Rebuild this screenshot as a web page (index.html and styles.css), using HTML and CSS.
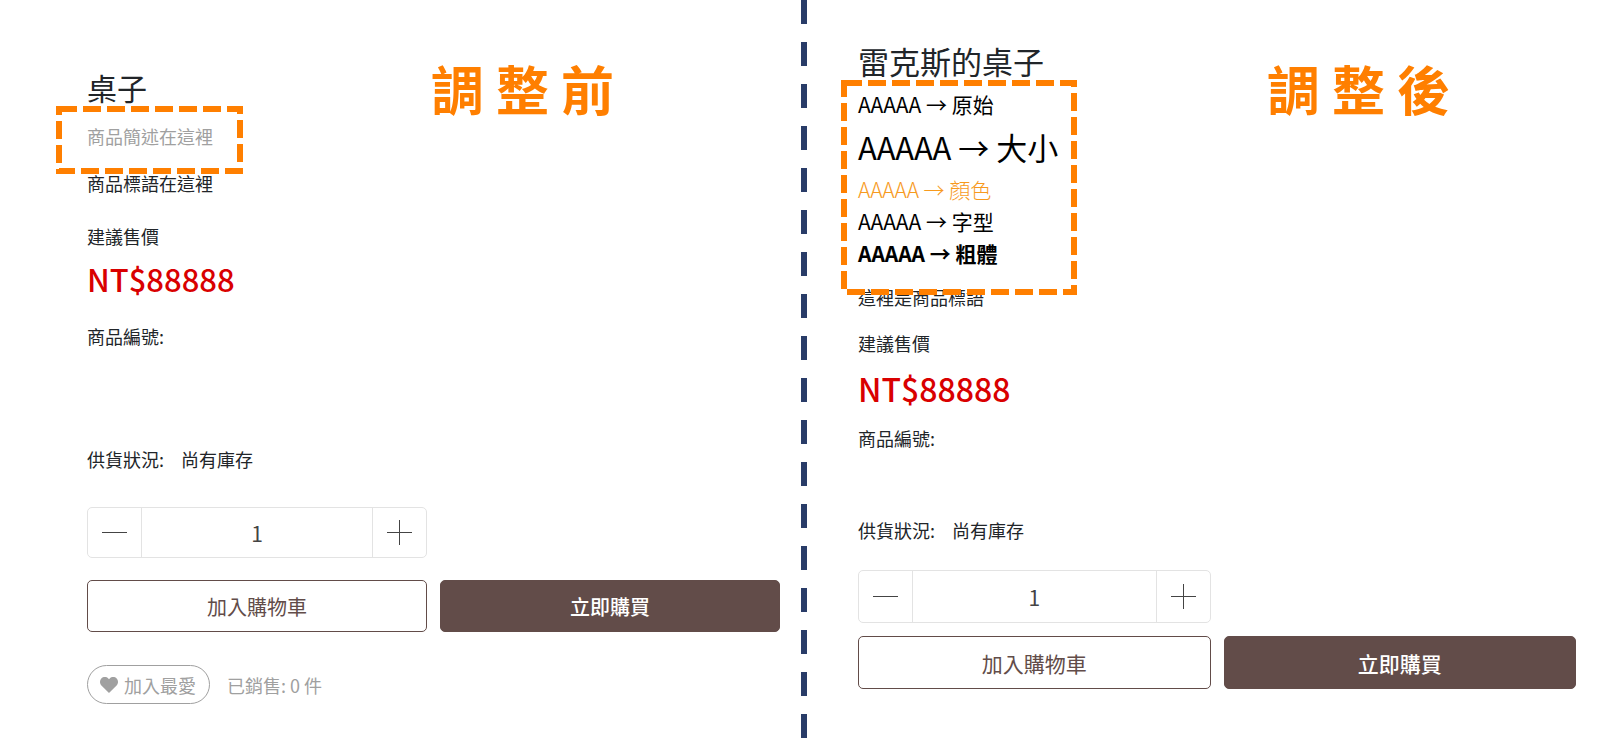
FILE: index.html
```html
<!DOCTYPE html>
<html lang="zh-Hant">
<head>
  <meta charset="UTF-8">
  <meta name="viewport" content="width=device-width, initial-scale=1">
  <title>商品簡述 調整前 / 調整後</title>
  <link rel="stylesheet" href="styles.css">
</head>
<body>
  <main class="compare">

    <section class="pane before">
      <div class="intro">
        <div class="summary">
          <h1 class="title">桌子</h1>
          <div class="description">
            <p class="muted">商品簡述在這裡</p>
            <svg class="frame" width="187" height="68" aria-hidden="true">
              <rect x="3" y="3" width="181" height="62"/>
            </svg>
          </div>
          <p class="slogan">商品標語在這裡</p>
          <p class="price-label">建議售價</p>
          <p class="price">NT$88888</p>
          <p class="sku">商品編號:</p>
          <p class="stock"><span>供貨狀況:</span><span>尚有庫存</span></p>
        </div>
        <h2 class="caption">調 整 前</h2>
      </div>

      <div class="actions">
        <div class="quantity">
          <button type="button" aria-label="減少數量">
            <svg width="25" height="25" viewBox="0 0 25 25"><path d="M0 12.5H25"/></svg>
          </button>
          <input type="text" value="1" aria-label="數量">
          <button type="button" aria-label="增加數量">
            <svg width="25" height="25" viewBox="0 0 25 25"><path d="M0 12.5H25M12.5 0V25"/></svg>
          </button>
        </div>
        <button type="button" class="btn outline">加入購物車</button>
        <button type="button" class="btn solid">立即購買</button>
      </div>

      <div class="extra">
        <button type="button" class="favorite">
          <svg width="18" height="16" viewBox="0 0 18 16">
            <path d="M9 16L1.4 8.4C-.4 6.500-.5 3.400 1.300 1.500 3.300-.5 6.500-.4 8.300 1.500L9 2.200l.7-.7C11.500-.4 14.700-.5 16.700 1.500 18.500 3.400 18.400 6.500 16.600 8.400z"/>
          </svg>
          加入最愛
        </button>
        <span class="sold">已銷售: 0 件</span>
      </div>
    </section>

    <div class="divider"></div>

    <section class="pane after">
      <div class="intro">
        <div class="summary">
          <h1 class="title">雷克斯的桌子</h1>
          <div class="description">
            <p>AAAAA → 原始</p>
            <p class="large">AAAAA → 大小</p>
            <p class="colored">AAAAA → 顏色</p>
            <p>AAAAA → 字型</p>
            <p class="bold">AAAAA → 粗體</p>
            <svg class="frame" width="236" height="215" aria-hidden="true">
              <rect x="3" y="3" width="230" height="209"/>
            </svg>
          </div>
          <p class="slogan">這裡是商品標語</p>
          <p class="price-label">建議售價</p>
          <p class="price">NT$88888</p>
          <p class="sku">商品編號:</p>
          <p class="stock"><span>供貨狀況:</span><span>尚有庫存</span></p>
        </div>
        <h2 class="caption">調 整 後</h2>
      </div>

      <div class="actions">
        <div class="quantity">
          <button type="button" aria-label="減少數量">
            <svg width="25" height="25" viewBox="0 0 25 25"><path d="M0 12.5H25"/></svg>
          </button>
          <input type="text" value="1" aria-label="數量">
          <button type="button" aria-label="增加數量">
            <svg width="25" height="25" viewBox="0 0 25 25"><path d="M0 12.5H25M12.5 0V25"/></svg>
          </button>
        </div>
        <button type="button" class="btn outline">加入購物車</button>
        <button type="button" class="btn solid">立即購買</button>
      </div>
    </section>

  </main>
</body>
</html>
```

FILE: styles.css
```css
:root {
  --highlight: #FF7F00;
  --divider: #293C68;
  --brand: #624C49;
  --price: #D90000;
  --text: #212529;
  --muted: #A0A0A0;
  --border: #E3E3E3;
}

* {
  box-sizing: border-box;
}

body {
  margin: 0;
  font-family: "Noto Sans CJK TC", "Noto Sans", sans-serif;
  font-size: 18px;
  line-height: 28px;
  color: var(--text);
  background: #FFFFFF;
}

h1, h2, p {
  margin: 0;
}

button, input {
  font-family: inherit;
  margin: 0;
}

button {
  cursor: pointer;
}

.compare {
  display: grid;
  grid-template-columns: 1fr 6px 1fr;
  min-height: 100vh;
}

.divider {
  background: repeating-linear-gradient(to bottom, var(--divider) 0 24px, transparent 24px 42px);
}

.before {
  padding: 0 21px 32px 87px;
}

.after {
  padding: 0 32px 32px 51px;
}

.intro {
  display: flex;
  align-items: flex-start;
}

.before .summary {
  flex: 0 0 344px;
  padding-top: 67px;
}

.after .summary {
  flex: 0 0 409px;
  padding-top: 41px;
}

.caption {
  margin-top: 58px;
  font-size: 53px;
  line-height: 60px;
  font-weight: 700;
  color: var(--highlight);
  white-space: nowrap;
}

.title {
  font-size: 30px;
  line-height: 40px;
  font-weight: 400;
}

.after .title {
  font-size: 31px;
}

/* product description with the dashed marker over it */
.description {
  position: relative;
  width: fit-content;
}

.before .description {
  margin-top: 15px;
}

.after .description {
  margin-top: 7px;
  font-size: 21px;
  line-height: 32px;
  color: #000000;
}

.muted {
  color: var(--muted);
}

.large {
  font-size: 31px;
  line-height: 53px;
}

.colored {
  color: #F79A1E;
  font-weight: 300;
}

.bold {
  font-weight: 700;
}

.frame {
  position: absolute;
  fill: none;
  stroke: var(--highlight);
  stroke-width: 6;
  stroke-dasharray: 18 6;
  pointer-events: none;
}

.before .frame {
  top: -16px;
  left: -31px;
}

.after .frame {
  top: -8px;
  left: -17px;
}

.price {
  font-size: 31px;
  line-height: 44px;
  font-weight: 500;
  color: var(--price);
}

.after .price {
  font-size: 32px;
}

.stock {
  display: flex;
  gap: 17px;
}

.before .slogan { margin-top: 19px; }
.before .price-label { margin-top: 25px; }
.before .price { margin-top: 7px; }
.before .sku { margin-top: 21px; }
.before .stock { margin-top: 95px; }

.after .slogan { margin-top: 14px; }
.after .price-label { margin-top: 18px; }
.after .price { margin-top: 9px; }
.after .sku { margin-top: 14px; }
.after .stock { margin-top: 64px; }

/* quantity and buy buttons */
.actions {
  display: grid;
  grid-template-columns: repeat(2, minmax(0, 1fr));
  column-gap: 13px;
}

.before .actions {
  margin-top: 34px;
  row-gap: 22px;
}

.after .actions {
  margin-top: 26px;
  row-gap: 13px;
}

.quantity {
  grid-column: 1;
  display: flex;
  height: 51px;
  border: 1px solid var(--border);
  border-radius: 5px;
}

.after .quantity {
  height: 53px;
}

.quantity button {
  flex: 0 0 53px;
  display: flex;
  align-items: center;
  justify-content: center;
  padding: 0;
  border: none;
  background: none;
}

.quantity svg {
  stroke: #444444;
  stroke-width: 1;
}

.quantity input {
  flex: 1;
  min-width: 0;
  padding: 0;
  border: 1px solid var(--border);
  border-width: 0 1px;
  background: none;
  font-size: 21px;
  text-align: center;
  color: #444444;
}

.btn {
  grid-row: 2;
  height: 52px;
  padding: 0;
  border: 1px solid var(--brand);
  border-radius: 5px;
  font-size: 20px;
}

.after .btn {
  height: 53px;
  font-size: 21px;
}

.outline {
  background: #FFFFFF;
  color: var(--brand);
}

.solid {
  background: var(--brand);
  color: #FFFFFF;
  font-weight: 500;
}

.extra {
  display: flex;
  align-items: center;
  gap: 17px;
  margin-top: 33px;
  color: var(--muted);
}

.favorite {
  display: flex;
  align-items: center;
  gap: 6px;
  height: 39px;
  padding: 0 13px 0 12px;
  border: 1px solid var(--muted);
  border-radius: 20px;
  background: none;
  font-size: 18px;
  color: var(--muted);
}

.favorite svg {
  fill: var(--muted);
}
```
